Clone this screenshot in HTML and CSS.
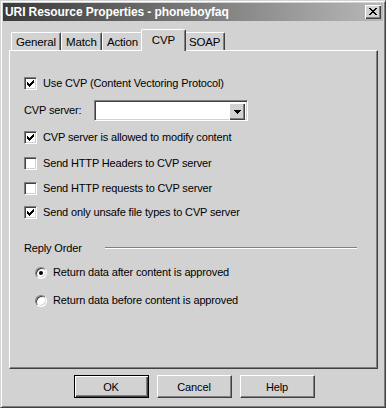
FILE: index.html
```html
<!DOCTYPE html>
<html>
<head>
<meta charset="utf-8">
<link rel="stylesheet" href="styles.css">
</head>
<body>
<div class="window">
  <div class="titlebar">
    <span class="title">URI Resource Properties - phoneboyfaq</span>
    <div class="close">
      <svg width="8" height="7" viewBox="0 0 8 7" shape-rendering="crispEdges"><path d="M0 0h2v1h-2z M6 0h2v1h-2z M1 1h2v1h-2z M5 1h2v1h-2z M2 2h4v1h-4z M3 3h2v1h-2z M2 4h4v1h-4z M1 5h2v1h-2z M5 5h2v1h-2z M0 6h2v1h-2z M6 6h2v1h-2z" fill="#000"/></svg>
    </div>
  </div>
  <div class="body">
    <div class="tabs">
      <div class="tab">General</div>
      <div class="tab">Match</div>
      <div class="tab">Action</div>
      <div class="tab selected">CVP</div>
      <div class="tab">SOAP</div>
    </div>
    <div class="panel">
      <div class="row r1"><span class="check on"></span><span class="label">Use CVP (Content Vectoring Protocol)</span></div>
      <div class="row combo-row">
        <span class="plain combo-label">CVP server:</span>
        <div class="combo"><div class="combo-field"></div><div class="combo-btn"><svg width="7" height="4" viewBox="0 0 7 4" shape-rendering="crispEdges"><path d="M0 0h7v1h-7z M1 1h5v1h-5z M2 2h3v1h-3z M3 3h1v1h-1z" fill="#000"/></svg></div></div>
      </div>
      <div class="row r2"><span class="check on"></span><span class="label">CVP server is allowed to modify content</span></div>
      <div class="row r3"><span class="check"></span><span class="label">Send HTTP Headers to CVP server</span></div>
      <div class="row r4"><span class="check"></span><span class="label">Send HTTP requests to CVP server</span></div>
      <div class="row r5"><span class="check on"></span><span class="label">Send only unsafe file types to CVP server</span></div>
      <div class="group"><span class="plain group-label">Reply Order</span><span class="etched"></span></div>
      <div class="row radio-row rr1"><span class="radio on"></span><span class="label">Return data after content is approved</span></div>
      <div class="row radio-row rr2"><span class="radio"></span><span class="label">Return data before content is approved</span></div>
    </div>
    <div class="buttons">
      <div class="btn default">OK</div>
      <div class="btn">Cancel</div>
      <div class="btn">Help</div>
    </div>
  </div>
</div>
</body>
</html>
```
FILE: styles.css
```css
* { box-sizing: border-box; }
html, body { margin: 0; padding: 0; background: #d2d2d2; }
body { font-family: "Liberation Sans", Arial, sans-serif; font-size: 11px; letter-spacing: -0.15px; color: #000; }

.window {
  width: 386px; height: 408px;
  border: 1px solid; border-color: #d2d2d2 #404040 #404040 #d2d2d2;
  box-shadow: inset 1px 1px #fff, inset -1px -1px #808080;
  padding: 2px;
  background: #d2d2d2;
  display: flex; flex-direction: column;
}

.titlebar {
  height: 18px;
  background: linear-gradient(to right, #3a3a3a, #b8b8b8);
  display: flex; align-items: center; justify-content: space-between;
  padding: 0 2px 0 2px;
}
.title { color: #fff; font-weight: bold; font-size: 12px; letter-spacing: -0.1px; }
.close {
  width: 16px; height: 14px;
  background: #d2d2d2;
  box-shadow: inset 1px 1px #fff, inset -1px -1px #404040, inset -2px -2px #808080;
  display: flex; align-items: center; justify-content: center;
  padding-bottom: 1px;
}
.close svg { display: block; }

.body { flex: 1; padding: 0 5px 0 6px; display: flex; flex-direction: column; }

.tabs { display: flex; align-items: flex-end; height: 21px; margin-top: 8px; padding-left: 2px; }
.tab {
  height: 18px; min-width: 41px; padding: 1px 4px 0;
  border-top: 1px solid #fff; border-left: 1px solid #fff; border-right: 1px solid #404040;
  box-shadow: inset -1px 0 #808080;
  border-radius: 2px 2px 0 0;
  display: flex; align-items: center; justify-content: center;
  white-space: nowrap;
  font-size: 11.5px;
}
.tab.selected {
  height: 22px; margin: 0 -2px -1px; min-width: 45px;
  background: #d2d2d2; position: relative; z-index: 1;
  padding-bottom: 3px;
}

.panel {
  height: 319px;
  border: 1px solid; border-color: #fff #404040 #404040 #fff;
  box-shadow: inset -1px -1px #808080;
  padding: 26px 0 0 14px;
  display: flex; flex-direction: column;
}

.row { display: flex; align-items: center; height: 13px; line-height: 13px; }
.label { margin-left: 6px; white-space: nowrap; }
.plain { white-space: nowrap; }

.check {
  width: 13px; height: 13px; flex: none;
  background: #fff;
  border: 1px solid; border-color: #808080 #fff #fff #808080;
  box-shadow: inset 1px 1px #404040, inset -1px -1px #d2d2d2;
  position: relative;
}
.check.on::after {
  content: ""; position: absolute; left: 2px; top: 2px; width: 7px; height: 7px;
  background: url("data:image/svg+xml;utf8,<svg xmlns='http://www.w3.org/2000/svg' width='7' height='7' viewBox='0 0 7 7' shape-rendering='crispEdges'><path d='M6 0h1v1h-1z M5 1h2v1h-2z M0 2h1v1h-1z M4 2h3v1h-3z M0 3h2v1h-2z M3 3h3v1h-3z M0 4h5v1h-5z M1 5h3v1h-3z M2 6h1v1h-1z' fill='black'/></svg>") no-repeat;
}

.combo-row { height: 21px; margin-top: 10px; }
.combo-label { width: 70px; }
.combo {
  width: 154px; height: 21px;
  background: #fff;
  border: 1px solid; border-color: #808080 #fff #fff #808080;
  box-shadow: inset 1px 1px #404040, inset -1px -1px #d2d2d2;
  padding: 2px;
  display: flex; justify-content: flex-end;
}
.combo-btn {
  width: 16px; height: 17px; background: #d2d2d2;
  box-shadow: inset 1px 1px #fff, inset -1px -1px #404040, inset -2px -2px #808080;
  display: flex; align-items: center; justify-content: center;
}
.combo-btn svg { display: block; }

.r2 { margin-top: 10px; }
.r3 { margin-top: 13px; }
.r4 { margin-top: 12px; }
.r5 { margin-top: 11px; }

.group { display: flex; align-items: center; height: 13px; margin-top: 22px; }
.group-label { width: 81px; }
.etched { width: 252px; height: 2px; border-top: 1px solid #808080; border-bottom: 1px solid #fff; }

.radio-row { padding-left: 11px; }
.rr1 { margin-top: 12px; }
.rr2 { margin-top: 15px; }
.radio {
  width: 12px; height: 12px; flex: none; border-radius: 50%;
  background: #fff;
  border: 1px solid; border-color: #808080 #fff #fff #808080;
  box-shadow: inset 1px 1px #404040, inset -1px -1px #d2d2d2;
  position: relative;
}
.radio.on::after {
  content: ""; position: absolute; left: 3px; top: 3px; width: 4px; height: 4px; border-radius: 50%; background: #000;
}
.radio-row .label { margin-left: 6px; }

.buttons { display: flex; justify-content: center; gap: 8px; margin-top: 6px; padding-left: 1px; }
.btn {
  width: 75px; height: 23px;
  border: 1px solid; border-color: #fff #404040 #404040 #fff;
  box-shadow: inset -1px -1px #808080;
  display: flex; align-items: center; justify-content: center;
}
.btn.default {
  border-color: #000;
  box-shadow: inset 1px 1px #fff, inset -1px -1px #404040, inset -2px -2px #808080;
}
```
